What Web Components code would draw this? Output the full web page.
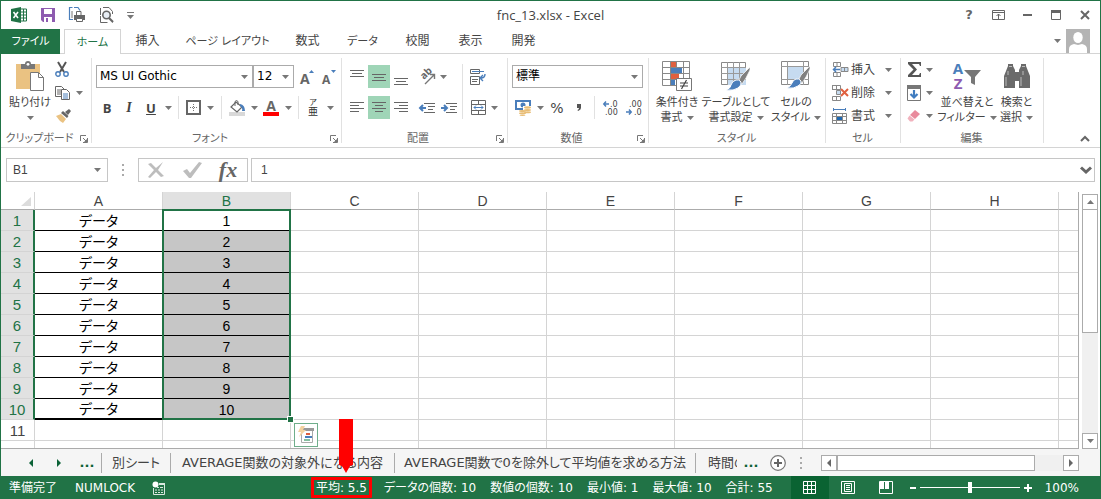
<!DOCTYPE html>
<html lang="ja">
<head>
<meta charset="utf-8">
<title>fnc_13.xlsx - Excel</title>
<style>
html,body{margin:0;height:100%}
body{font:12px/16px "DejaVu Sans","Noto Sans CJK JP",sans-serif;font-feature-settings:"palt";color:#444;background:#fff;overflow:hidden}
</style>
</head>
<body>
<excel-window></excel-window>
<script>
const ICONS = {
  arrow:[7,4,'<path d="M0 0h7L3.5 4z" fill="#777"/>'],
  caret:[10,6,'<path d="M1 5l4-4 4 4" fill="none" stroke="#666" stroke-width="2"/>'],
  launcher:[8,8,'<path d="M.5 6V.5H6" fill="none" stroke="#777"/><path d="M3 3l3 3M7.500 3v4.500H3" fill="none" stroke="#777"/><path d="M7 4v3H4z" fill="#777"/>'],
  excel:[16,16,'<path d="M9 2h6.500v12H9" fill="#fff" stroke="#217346"/><path d="M10 5h5M10 8h5M10 11h5M12.500 2v12" stroke="#217346"/><path d="M0 2l10-2v16L0 14z" fill="#217346"/><path d="M2.500 5l4.500 6M7 5l-4.500 6" stroke="#fff" stroke-width="1.600"/>'],
  save:[14,14,'<path d="M0 0h14v14H2l-2-2z" fill="#8e5bb0"/><path d="M3 1h8v5H3zM3 9h8v5H3z" fill="#fff"/><path d="M5 10h2v4H5z" fill="#8e5bb0"/>'],
  print:[17,16,'<path d="M3.500.5h-3v12H4M5 .5h4l2 3" fill="none" stroke="#4a7ebb" stroke-width="1.200"/><path d="M3 4v7" stroke="#777"/><path d="M7.500 8V4.500H12V8" fill="#fff" stroke="#666"/><path d="M5 8h11v5H5z" fill="#666"/><path d="M7.500 11.500h6v3h-6z" fill="#fff" stroke="#666"/>'],
  preview:[15,16,'<path d="M4 .5h6l3.500 4V7M1.500 8V1M1.500 9v6.500h7M13.500 14v1.500" fill="none" stroke="#666"/><circle cx="7.500" cy="8" r="3.700" fill="#e8eef5" stroke="#666" stroke-width="1.600"/><path d="M10 11l4 4" stroke="#666" stroke-width="2.200"/>'],
  qat:[7,7,'<path d="M0 0h7v1H0zM0 3h7L3.500 7z" fill="#777"/>'],
  ribbonopt:[13,10,'<path d="M.5.5h12v9H.5zM.5 2.500h12M6.500 9V4M4.500 6l2-2 2 2" fill="none" stroke="#666"/>'],
  min:[9,2,'<path d="M0 0h9v2H0z" fill="#666"/>'],
  max:[10,10,'<path d="M.5 1v8.500h9V1" fill="none" stroke="#666"/><path d="M0 0h10v3H0z" fill="#666"/>'],
  close:[10,10,'<path d="M1 1l8 8M9 1L1 9" stroke="#666" stroke-width="2"/>'],
  user:[24,24,'<path d="M0 0h24v24H0z" fill="#b4b4b4"/><ellipse cx="12" cy="8.500" rx="4.700" ry="5.500" fill="#fff"/><path d="M3 24v-4q0-4 5-5l4 1 4-1q5 1 5 5v4z" fill="#fff"/>'],
  paste:[28,30,'<path d="M0 3h24v25H0z" fill="#eac282"/><path d="M5 3h4a3 3 0 0 1 6 0h4v5H5z" fill="#777"/><circle cx="12" cy="3.300" r="1.400" fill="#fff"/><path d="M14.500 11.500h8l5 5v13h-13z" fill="#fff" stroke="#777"/><path d="M22.500 11.500v5h5" fill="none" stroke="#777"/>'],
  cut:[14,15,'<path d="M3 0l6 10M11 0L5 10" stroke="#555" stroke-width="2"/><circle cx="3" cy="12" r="2.200" fill="none" stroke="#4a7ebb" stroke-width="1.400"/><circle cx="11" cy="12" r="2.200" fill="none" stroke="#4a7ebb" stroke-width="1.400"/>'],
  copy:[15,14,'<path d="M.5.500h6l3 3v7h-9zM2 4h4M2 6h4M2 8h4" fill="#fff" stroke="#666"/><path d="M6.500 3.500h5l3 3v7h-8z" fill="#fff" stroke="#666"/><path d="M8 8h5M8 10h5M8 12h5" stroke="#4a7ebb"/>'],
  brush:[16,14,'<path d="M1 7l5-2 5 5-3 4-3-2z" fill="#eac282"/><path d="M6 4l6 5 1.500-2-5.500-5zM10 3l3 3 3-4-2-2z" fill="#666"/>'],
  borders:[15,15,'<path d="M1 1h13v13H1z" fill="none" stroke="#666" stroke-width="2"/><path d="M7.500 4v8M4 7.500h8" stroke="#777" stroke-dasharray="1 1"/>'],
  fill:[17,16,'<path d="M0 12h16v4H0z" fill="#d9d9d9"/><path d="M7 2l6 5-5 5-6-5z" fill="#fff" stroke="#666" stroke-width="1.200"/><path d="M6 6V1.500q1.500-2 3 0V5" fill="none" stroke="#666"/><path d="M11 4q5 1 5 7l-3 0q1-3-2-5z" fill="#4a7ebb"/>'],
  fontcolor:[16,17,'<path d="M0 13h16v4H0z" fill="#f00"/><text x="8" y="12" font-size="14" font-weight="bold" font-family="Open Sans" text-anchor="middle" fill="#666">A</text>'],
  grow:[14,16,'<text x="0" y="15" font-size="14" font-weight="bold" font-family="Open Sans" fill="#666">A</text><path d="M9 4h5l-2.500-3z" fill="#4a7ebb"/>'],
  shrink:[14,16,'<text x="0" y="15" font-size="12" font-weight="bold" font-family="Open Sans" fill="#666">A</text><path d="M9 1h5l-2.500 3z" fill="#4a7ebb"/>'],
  ruby:[10,17,'<text x="5" y="6" font-size="8" text-anchor="middle" fill="#333">ア</text><text x="5" y="16" font-size="10" text-anchor="middle" fill="#333">亜</text>'],
  atop:[14,16,'<path d="M0 1.500h14M2 4.500h10M0 7.500h14" stroke="#666"/>'],
  amid:[14,16,'<path d="M0 5.500h14M2 8.500h10M0 11.500h14" stroke="#666"/>'],
  abot:[14,16,'<path d="M0 9.500h14M2 12.500h10M0 15.500h14" stroke="#666"/>'],
  left:[14,13,'<path d="M0 1.500h14M0 4.500h9M0 7.500h14M0 10.500h9" stroke="#666"/>'],
  center:[14,13,'<path d="M0 1.500h14M3 4.500h8M0 7.500h14M3 10.500h8" stroke="#666"/>'],
  right:[14,13,'<path d="M0 1.500h14M5 4.500h9M0 7.500h14M5 10.500h9" stroke="#666"/>'],
  orient:[16,16,'<text x="0" y="0" transform="translate(5 11) rotate(-45)" font-size="10" font-weight="bold" font-family="Open Sans" fill="#666">ab</text><path d="M6 15l9-9M11 5.500h4.500V10" fill="none" stroke="#777" stroke-width="1.400"/>'],
  outdent:[16,12,'<path d="M5 1.500h11M9 4.500h7M9 7.500h5M5 10.500h11" stroke="#666"/><path d="M7 6H2M4 3L1 6l3 3" fill="none" stroke="#4a7ebb" stroke-width="2"/>'],
  indent:[16,12,'<path d="M5 1.500h11M9 4.500h7M9 7.500h5M5 10.500h11" stroke="#666"/><path d="M0 6h5M3 3l3 3-3 3" fill="none" stroke="#4a7ebb" stroke-width="2"/>'],
  wrap:[16,16,'<path d="M.5.500h9v4h-9zM.5 7.500h9v8h-9zM2 10.500h6M2 12.500h5" fill="none" stroke="#666"/><path d="M2 2.500h12" stroke="#4a7ebb"/><path d="M15 5q0 4-4 4M13 6l-3 3 3 3" fill="none" stroke="#4a7ebb" stroke-width="1.400"/>'],
  merge:[15,15,'<path d="M.5.500h14v14H.5zM0 4.500h15M0 10.500h15M7.500 0v4M7.500 11v4" fill="none" stroke="#666"/><path d="M3 7.500h9M5 5.500l-2 2 2 2M10 5.500l2 2-2 2" fill="none" stroke="#4a7ebb"/>'],
  currency:[17,16,'<path d="M1 1h14v8H1z" fill="#fff" stroke="#4a7ebb" stroke-width="2"/><circle cx="8" cy="5" r="2.500" fill="#4a7ebb"/><path d="M8 6h9v8h-4v2H4v-6h4z" fill="#fff"/><g fill="#e8bd76"><ellipse cx="12.500" cy="7.500" rx="3.500" ry="1.200"/><ellipse cx="12.500" cy="10" rx="3.500" ry="1"/><ellipse cx="12.500" cy="12.200" rx="3.500" ry="1"/><ellipse cx="7.500" cy="11" rx="3.500" ry="1"/><ellipse cx="7.500" cy="13.200" rx="3.500" ry="1"/><ellipse cx="7.500" cy="15.200" rx="3" ry=".8"/></g>'],
  comma:[6,12,'<path d="M1 2h4v4q0 2-3 3l-.5-1q1.500-.7 1.500-2H1z" fill="#555"/>'],
  incdec:[16,16,'<text x="7" y="7" font-size="8" fill="#444">.0</text><text x="2" y="15" font-size="8" fill="#444">.00</text><path d="M6 4H1M3 1.500L.8 4 3 6.500" fill="none" stroke="#4a7ebb" stroke-width="1.500"/>'],
  decdec:[16,16,'<text x="3" y="7" font-size="8" fill="#444">.00</text><text x="8" y="15" font-size="8" fill="#444">.0</text><path d="M0 12h5M3 9.500L5.200 12 3 14.500" fill="none" stroke="#4a7ebb" stroke-width="1.500"/>'],
  cond:[30,31,'<path d="M.5.500h27v24H.5zM0 6.500h28M0 12.500h28M0 18.500h28M8.500 0v25M14.500 0v25M21.500 0v25" fill="#fff" stroke="#888"/><path d="M9 1h5v5H9zM9 13h8v5H9z" fill="#e0603f"/><path d="M9 7h11v5H9zM9 19h4v5H9z" fill="#4a7ebb"/><path d="M14.500 17.500h15v12h-15z" fill="#fff" stroke="#777"/><path d="M18 22h8M18 25h8M24.500 19l-5 9" stroke="#444" stroke-width="1.200"/>'],
  tablefmt:[30,30,'<path d="M.5 1.500h24v22H.5z" fill="#fff" stroke="#888"/><path d="M7 7h18v17H7z" fill="#c6dbf0"/><path d="M0 6.500h25M0 12.500h25M0 18.500h25M6.500 1v23M12.500 1v23M18.500 1v23" stroke="#999"/><path d="M29 6l-9 9-3 6 4 2 4-6 4-8z" fill="#808080" stroke="#fff" stroke-width=".7"/><path d="M15 19q3-1 5 2 1 3-3 6-4 3-12 2 5-2 5-5 1-4 5-5z" fill="#4a7ebb" stroke="#fff"/>'],
  cellstyle:[30,30,'<path d="M.5.500h27v23H.5z" fill="#fff" stroke="#888"/><path d="M7 6h15v12H7z" fill="#c6dbf0"/><path d="M0 5.500h28M0 18.500h28M6.500 0v24M22.500 0v24" stroke="#999"/><path d="M29 5l-9 9-3 6 4 2 4-6 4-8z" fill="#808080" stroke="#fff" stroke-width=".7"/><path d="M15 18q3-1 5 2 1 3-3 5-4 3-11 2 4-2 5-5 1-3 4-4z" fill="#4a7ebb" stroke="#fff"/>'],
  insert:[17,16,'<path d="M1.500.500h7v4h-7zM5 0v5M1.500 10.500h7v4h-7zM5 10v5" fill="none" stroke="#888"/><path d="M9 5.500h7v4H9zM12.500 5v4" fill="#c6dbf0" stroke="#888"/><path d="M8 7.500H2M4 5L1.500 7.500 4 10" fill="none" stroke="#4a7ebb" stroke-width="1.500"/>'],
  del:[17,16,'<path d="M.5.500h8v4h-8zM4.500 0v5M.5 11.500h8v4h-8zM4.500 11v5M.5 0v5" fill="none" stroke="#888"/><path d="M4.500 5.500h4v4h-4z" fill="#c6dbf0" stroke="#888"/><path d="M9 4l7 7M16 4l-7 7" stroke="#e0603f" stroke-width="2"/>'],
  format:[17,16,'<path d="M.5 5.500h14v10H.5zM0 8.500h15M0 12.500h15M4.500 5v11M10.500 5v11" fill="none" stroke="#888"/><path d="M5 9h5v3H5z" fill="#1f68b0"/><path d="M1 1.500h13M1.500 0v3M13.500 0v3" stroke="#4a7ebb"/>'],
  sum:[15,15,'<path d="M1 0h13v4h-1l-1-2H5l5 5.500L5 13h7l1-2h1v4H1v-2l5.500-5.500L1 2z" fill="#555"/>'],
  filldown:[14,16,'<path d="M.5.500h13v15H.5z" fill="#fff" stroke="#777"/><path d="M0 0h14v4H0z" fill="#777"/><path d="M7 5v7M3.500 9L7 12.500 10.500 9" fill="none" stroke="#3f7cc0" stroke-width="2.200"/>'],
  erase:[14,13,'<path d="M8 1l5 4-5 5-5-4z" fill="#e98a9c"/><path d="M2.500 6.500l5 4-2 2H3L.5 9.500z" fill="#f1b2bd"/>'],
  sort:[30,29,'<text x="6" y="12" font-size="15" font-family="Open Sans" font-weight="bold" text-anchor="middle" fill="#4a7ebb">A</text><text x="6" y="27" font-size="15" font-family="Open Sans" font-weight="bold" text-anchor="middle" fill="#8e5bb0">Z</text><path d="M12 8h17l-6 7v8l-4-2v-6z" fill="#777"/>'],
  find:[28,26,'<path d="M5 3V1h5v2l2 4v18H1V13zM18 3V1h5v2l4 10v12H16V7z" fill="#6a6a6a"/><path d="M12 9h4v9h-4z" fill="#6a6a6a"/><path d="M3 14v9M6 3.500h3M19 3.500h3M18 14v9M5 8v4M20 8v4" stroke="#bbb"/>'],
  dots:[2,12,'<path d="M0 0h2v2H0zM0 5h2v2H0zM0 10h2v2H0z" fill="#aaa"/>'],
  cancel:[18,16,'<path d="M1 2l3-1 5 5 7-6-5 8 6 6-3 1-5-5-6 6-2-1 6-7z" fill="#bdbdbd"/>'],
  enter:[19,16,'<path d="M0 9l4-2 3 4L16 0l3 1L8 16H6z" fill="#bdbdbd"/>'],
  chevron:[12,8,'<path d="M1 1.500l5 4.500 5-4.500" fill="none" stroke="#666" stroke-width="3"/>'],
  corner:[10,9,'<path d="M10 0v9H0z" fill="#dcdcdc"/>'],
  pasteopt:[18,18,'<path d="M4.500 4v12.500h11V4z" fill="#fff" stroke="#aaa"/><path d="M6 2h11v3H6z" fill="#999"/><path d="M4 0h4L6 4h3L2 11l2-5H1z" fill="#f3d2a0"/><path d="M9 7h4v2H9z" fill="#e0603f"/><path d="M8 10h7v2H8z" fill="#4a7ebb"/><path d="M7 13h6v2H7z" fill="#86bfa0"/>'],
  prev:[4,8,'<path d="M4 0v8L0 4z" fill="#0b6237"/>'],
  next:[4,8,'<path d="M0 0v8l4-4z" fill="#0b6237"/>'],
  plus:[16,16,'<circle cx="8" cy="8" r="7.300" fill="#fff" stroke="#777" stroke-width="1.200"/><path d="M4 8h8M8 4v8" stroke="#666" stroke-width="2"/>'],
  sleft:[4,8,'<path d="M4 0v8L0 4z" fill="#666"/>'],
  sright:[4,8,'<path d="M0 0v8l4-4z" fill="#666"/>'],
  sup:[7,4,'<path d="M0 4h7L3.500 0z" fill="#777"/>'],
  macro:[13,14,'<path d="M12.500 3v10.500h-11V7M8 3h5M5 6.500h2M8 6.500h3M3 9h2M6 9h2M9 9h2M3 11.500h2M6 11.500h2M9 11.500h2" fill="none" stroke="#d9e8df"/><path d="M7 2h6v2H7z" fill="#d9e8df"/><circle cx="3.500" cy="3.500" r="3" fill="#fff"/>'],
  normal:[13,13,'<path d="M.5.500h12v12H.5zM0 4.500h13M0 8.500h13M4.500 0v13M8.500 0v13" fill="none" stroke="#fff"/>'],
  page:[14,13,'<path d="M.5.500h13v12H.5z" fill="none" stroke="#fff"/><path d="M3.500 2.500h7v8h-7zM5 4.500h4M5 6.500h4M5 8.500h4" fill="none" stroke="#fff"/>'],
  break:[14,13,'<path d="M.5.500h13v12H.5z" fill="none" stroke="#fff"/><path d="M1 0h4v8H1zM6 0h4v8H6z" fill="#fff"/>'],
  zminus:[6,2,'<path d="M0 0h6v2H0z" fill="#fff"/>'],
  zplus:[8,8,'<path d="M0 3h8v2H0zM3 0h2v8H3z" fill="#fff"/>']
};

function define(name, html, setup) {
  const template = document.createElement('template');
  template.innerHTML = html;
  customElements.define(name, class extends HTMLElement {
    connectedCallback() {
      if (this.shadowRoot) return;
      this.attachShadow({mode:'open'}).append(template.content.cloneNode(true));
      if (setup) setup(this, this.shadowRoot);
    }
  });
}

define('x-icon', '<style>:host{display:inline-flex;flex:none}svg{display:block;overflow:visible}</style>', (host, root) => {
  const [w, h, art] = ICONS[host.getAttribute('name')];
  root.innerHTML += `<svg width="${w}" height="${h}" viewBox="0 0 ${w} ${h}" aria-hidden="true">${art}</svg>`;
});

/* Small button: an icon, or slotted text, or both */
define('tool-button', `<style>
:host{display:flex;flex:none;width:var(--w,22px);height:var(--h,23px)}
:host([active]){background:#9fd5b7}
button{all:unset;display:flex;align-items:center;justify-content:var(--justify,center);gap:2px;width:100%;height:100%}
.end{margin-left:auto;margin-right:8px}
</style><button type="button"><slot></slot></button>`, (host, root) => {
  const button = root.querySelector('button');
  button.setAttribute('aria-label', host.getAttribute('label') || host.textContent);
  if (host.hasAttribute('icon')) button.insertAdjacentHTML('afterbegin', `<x-icon name="${host.getAttribute('icon')}"></x-icon>`);
  if (host.hasAttribute('menu')) button.insertAdjacentHTML('beforeend', '<x-icon class="end" name="arrow"></x-icon>');
});

/* Tall button: icon over two lines of caption */
define('big-button', `<style>
:host{display:flex;flex:none;width:var(--w,60px)}
button{all:unset;display:flex;flex-direction:column;align-items:center;width:100%;text-align:center;font-size:11px;line-height:15px;white-space:nowrap}
.art{display:flex;align-items:center;height:32px;padding:6px 0 3px}
.second{display:flex;align-items:center;justify-content:center;gap:4px;height:15px}
</style><button type="button"><span class="art"></span><slot></slot><span class="second"><slot name="second"></slot><x-icon name="arrow"></x-icon></span></button>`, (host, root) => {
  root.querySelector('.art').innerHTML = `<x-icon name="${host.getAttribute('icon')}"></x-icon>`;
});

define('ribbon-group', `<style>
:host{display:flex;flex-direction:column;flex:none;box-sizing:border-box;width:var(--group);background:linear-gradient(#e1e1e1,#e1e1e1) right top 4px/1px 85px no-repeat}
.body{flex:1;display:flex;padding:0 4px}
footer{display:flex;align-items:center;height:16px;padding-right:2px;color:#666;font-size:11px;text-align:center;white-space:nowrap}
footer span{flex:1}
</style><div class="body"><slot></slot></div><footer><span></span></footer>`, (host, root) => {
  root.querySelector('span').textContent = host.getAttribute('label');
  if (host.hasAttribute('launcher')) root.querySelector('footer').insertAdjacentHTML('beforeend', '<tool-button style="--w:12px;--h:12px" label="詳細設定" icon="launcher"></tool-button>');
});

define('combo-box', `<style>
:host{display:grid;box-sizing:border-box;height:23px;width:var(--w);border:1px solid #ababab;align-items:center;background:#fff}
select{all:unset;grid-area:1/1;color:#000;padding-left:3px;line-height:21px;white-space:nowrap}
x-icon{grid-area:1/1;justify-self:end;margin-right:4px;pointer-events:none}
</style><select></select><x-icon name="arrow"></x-icon>`, (host, root) => {
  const select = root.querySelector('select');
  select.setAttribute('aria-label', host.getAttribute('label'));
  select.add(new Option(host.getAttribute('value')));
});

define('title-bar', `<style>
:host{display:grid;grid-template-columns:1fr auto 1fr;align-items:center;height:28px}
.quick{display:flex;align-items:center;gap:6px;padding-left:6px}
.window{display:flex;justify-content:flex-end;align-items:center;gap:7px;padding-right:4px}
h1{margin:0;font:13px/16px "Open Sans",sans-serif;color:#444}
.window b{font-size:13px;color:#666}
</style>
<div class="quick"><tool-button icon="excel" label="Excel" style="--w:24px"></tool-button><tool-button icon="save" label="上書き保存"></tool-button><tool-button icon="print" label="印刷" style="--w:24px"></tool-button><tool-button icon="preview" label="印刷プレビュー"></tool-button><tool-button icon="qat" label="カスタマイズ" style="--w:14px"></tool-button></div>
<h1>fnc_13.xlsx - Excel</h1>
<div class="window"><tool-button label="ヘルプ"><b>?</b></tool-button><tool-button icon="ribbonopt" label="リボンの表示"></tool-button><tool-button icon="min" label="最小化"></tool-button><tool-button icon="max" label="最大化"></tool-button><tool-button icon="close" label="閉じる"></tool-button></div>`);

define('ribbon-tabs', `<style>
:host{display:flex;height:25px;border-bottom:1px solid #d4d4d4;box-sizing:border-box}
nav{display:flex;flex:1}
button{all:unset;box-sizing:border-box;height:25px;line-height:25px;width:var(--w,53px);text-align:center;white-space:nowrap}
.kana{font-size:11px}
.file{background:#217346;color:#fff;--w:59px;margin-right:4px}
.on{border:1px solid #d4d4d4;border-bottom:0;background:#fff;color:#217346;--w:57px}
.account{display:flex;align-items:center;padding-right:10px;gap:2px}
</style>
<nav><button class="file kana">ファイル</button><button class="on kana">ホーム</button><button>挿入</button><button class="kana" style="--w:107px">ページ レイアウト</button><button>数式</button><button class="kana" style="--w:57px">データ</button><button>校閲</button><button>表示</button><button>開発</button></nav>
<div class="account"><tool-button icon="arrow" label="アカウント" style="--w:14px"></tool-button><x-icon name="user"></x-icon></div>`);

define('excel-ribbon', `<style>
:host{display:flex;height:93px;border-bottom:1px solid #d4d4d4}
.rows{display:grid;grid-template-rows:23px 23px;gap:8px;padding-top:11px;align-content:start}
.row{display:flex}
.stack{display:grid;grid-template-rows:repeat(3,23px);padding-top:4px;align-content:start}
.sep{width:1px;height:23px;background:#e1e1e1;margin:0 4px;flex:none}
.sep.tall{height:55px;margin:10px 4px 0 2px}
.gap{width:4px}
.gap.small{width:2px}
.cells{padding-left:2px;--w:68px}
.edit{padding-left:2px;--w:34px}
.tight{--justify:flex-start}
.collapse{margin:auto 4px 0 auto}
b,i,u{font:bold 13px/16px "Open Sans",sans-serif;color:#444}
i{font:italic bold 14px/16px "Liberation Serif",serif}
.percent{font-size:14px}
</style>
<ribbon-group label="クリップボード" launcher style="--group:91px">
<big-button icon="paste" style="--w:50px">貼り付け</big-button>
<div class="stack tight"><tool-button icon="cut" label="切り取り"></tool-button><tool-button icon="copy" label="コピー" menu style="--w:36px"></tool-button><tool-button icon="brush" label="書式のコピー"></tool-button></div>
</ribbon-group>
<ribbon-group label="フォント" launcher style="--group:250px">
<div class="rows"><div class="row"><combo-box label="フォント" value="MS UI Gothic" style="--w:157px"></combo-box><combo-box label="サイズ" value="12" style="--w:41px"></combo-box><div class="gap small"></div><tool-button icon="grow" label="拡大"></tool-button><tool-button icon="shrink" label="縮小"></tool-button></div>
<div class="row"><tool-button><b>B</b></tool-button><tool-button><i>I</i></tool-button><tool-button><u>U</u></tool-button><tool-button icon="arrow" label="下線" style="--w:12px"></tool-button><span class="sep"></span><tool-button icon="borders" label="罫線" style="--w:20px"></tool-button><tool-button icon="arrow" label="罫線の種類" style="--w:14px"></tool-button><span class="sep"></span><tool-button icon="fill" label="塗りつぶし"></tool-button><tool-button icon="arrow" label="塗りつぶしの色" style="--w:12px"></tool-button><tool-button icon="fontcolor" label="フォントの色"></tool-button><tool-button icon="arrow" label="色の選択" style="--w:12px"></tool-button><span class="sep"></span><tool-button icon="ruby" label="ふりがな" style="--w:20px"></tool-button><tool-button icon="arrow" label="ふりがなの設定" style="--w:14px"></tool-button></div></div>
</ribbon-group>
<ribbon-group label="配置" launcher style="--group:166px">
<div class="rows"><div class="row"><tool-button icon="atop" label="上揃え"></tool-button><tool-button icon="amid" label="上下中央揃え" active></tool-button><tool-button icon="abot" label="下揃え"></tool-button><div class="gap"></div><tool-button icon="orient" label="方向"></tool-button><tool-button icon="arrow" label="方向の種類" style="--w:10px"></tool-button></div>
<div class="row"><tool-button icon="left" label="左揃え"></tool-button><tool-button icon="center" label="中央揃え" active></tool-button><tool-button icon="right" label="右揃え"></tool-button><div class="gap"></div><tool-button icon="outdent" label="インデントを減らす"></tool-button><tool-button icon="indent" label="インデントを増やす"></tool-button></div></div>
<span class="sep tall"></span>
<div class="rows"><div class="row"><tool-button icon="wrap" label="折り返し"></tool-button></div><div class="row"><tool-button icon="merge" label="セルを結合"></tool-button><tool-button icon="arrow" label="結合の種類" style="--w:10px"></tool-button></div></div>
</ribbon-group>
<ribbon-group label="数値" launcher style="--group:141px">
<div class="rows"><combo-box label="表示形式" value="標準" style="--w:131px"></combo-box>
<div class="row"><tool-button icon="currency" label="通貨"></tool-button><tool-button icon="arrow" label="通貨の種類" style="--w:12px"></tool-button><tool-button><span class="percent">%</span></tool-button><tool-button icon="comma" label="桁区切り"></tool-button><span class="sep"></span><tool-button icon="incdec" label="小数点以下を増やす" style="--w:24px"></tool-button><tool-button icon="decdec" label="小数点以下を減らす"></tool-button></div></div>
</ribbon-group>
<ribbon-group label="スタイル" style="--group:177px">
<big-button icon="cond" style="--w:48px">条件付き<span slot="second">書式</span></big-button><big-button icon="tablefmt" style="--w:70px">テーブルとして<span slot="second">書式設定</span></big-button><big-button icon="cellstyle" style="--w:50px">セルの<span slot="second">スタイル</span></big-button>
</ribbon-group>
<ribbon-group label="セル" style="--group:75px">
<div class="stack tight cells"><tool-button icon="insert" menu>挿入</tool-button><tool-button icon="del" menu>削除</tool-button><tool-button icon="format" menu>書式</tool-button></div>
</ribbon-group>
<ribbon-group label="編集" style="--group:143px">
<div class="stack tight edit"><tool-button icon="sum" label="合計" menu></tool-button><tool-button icon="filldown" label="フィル" menu></tool-button><tool-button icon="erase" label="クリア" menu></tool-button></div>
<big-button icon="sort" style="--w:52px">並べ替えと<span slot="second">フィルター</span></big-button><big-button icon="find" style="--w:47px">検索と<span slot="second">選択</span></big-button>
</ribbon-group>
<tool-button class="collapse" icon="caret" label="リボンを折りたたむ" style="--h:16px"></tool-button>`);

define('formula-bar', `<style>
:host{display:flex;padding:10px 5px;height:24px;align-items:center}
.box{box-sizing:border-box;height:24px;border:1px solid #c6c6c6;display:flex;align-items:center;background:#fff}
input{all:unset;flex:1;min-width:0;font:12px/16px "Liberation Sans",sans-serif;padding-left:6px;color:#444}
.name{width:102px;padding-right:6px}
.dots{margin:0 14px}
.keys{width:110px;padding-left:6px;gap:14px;margin-right:3px}
.formula{flex:1;padding-left:3px;padding-right:2px}
.fx{font:italic bold 22px/22px "Liberation Serif",serif;color:#666}
</style>
<div class="box name"><input aria-label="名前ボックス" value="B1"><x-icon name="arrow"></x-icon></div>
<x-icon class="dots" name="dots"></x-icon>
<div class="box keys"><tool-button icon="cancel" label="キャンセル"></tool-button><tool-button icon="enter" label="入力"></tool-button><tool-button label="関数の挿入"><span class="fx">fx</span></tool-button></div>
<div class="box formula"><input aria-label="数式バー" value="1"><x-icon name="chevron"></x-icon></div>`);

define('scroll-bar', `<style>
:host{display:flex;box-sizing:border-box;flex:none;background:#f0f0f0}
:host([vertical]){flex-direction:column;width:16px}
:host(:not([vertical])){height:16px}
tool-button,.thumb{box-sizing:border-box;border:1px solid #ababab;background:#fff;--w:16px;--h:16px}
.thumb{flex:0 0 var(--thumb)}
.end{margin-left:auto}
:host([vertical]) .thumb{margin-top:-1px}
:host([vertical]) .end{margin:auto 0 0}
</style><tool-button class="start" label="戻る"></tool-button><div class="thumb"></div><tool-button class="end" label="進む"></tool-button>`, (host, root) => {
  const vertical = host.hasAttribute('vertical');
  root.querySelector('.start').setAttribute('icon', vertical ? 'sup' : 'sleft');
  root.querySelector('.end').setAttribute('icon', vertical ? 'arrow' : 'sright');
  root.querySelectorAll('tool-button').forEach(b => b.replaceWith(b.cloneNode(true)));
});

define('sheet-grid', `<style>
:host{display:flex;flex:1;min-height:0}
.view{flex:1;min-width:0;overflow:hidden;border:solid #ababab;border-width:0 1px 1px 0;box-sizing:border-box}
table{table-layout:fixed;width:100%;border-spacing:0;font-family:"Liberation Sans","Noto Sans CJK JP",sans-serif;font-size:14px;line-height:18px;color:#000}
th,td{box-sizing:border-box;height:21px;padding:2px 0 0;border:solid #d4d4d4;border-width:0 1px 1px 0;font-weight:normal;text-align:center;white-space:nowrap}
th:last-child,td:last-child{border-right:0}
th{color:#444}
thead th{height:18px;line-height:16px;padding:1px 0 0;border-bottom-color:#ababab}
th.on{background:#e1e1e1;color:#217346}
tbody th.on{border-right:2px solid #217346}
tbody th{font-size:15px}
.corner{text-align:right}
.corner x-icon{padding-right:3px}
.data{border-bottom-color:#000}
.last{border-bottom-width:2px;padding:1px 0 0}
.sel{background:#c6c6c6;border-bottom-color:#000}
.first{position:relative;background:#fff}
.range{position:absolute;z-index:1;left:-1px;top:-1px;width:129px;height:211px;box-sizing:border-box;border:2px solid #217346}
.handle{position:absolute;right:-5px;bottom:-5px;width:5px;height:5px;background:#217346;border:1px solid #fff}
.options{position:absolute;right:-29px;bottom:-29px;box-sizing:border-box;border:1px solid #6fae8b;background:#fff;--w:24px;--h:24px}
scroll-bar{margin:2px 2px 0 3px;--thumb:124px}
</style>
<div class="view"><table><colgroup><col style="width:34px"></colgroup><thead><tr></tr></thead><tbody></tbody></table></div>
<scroll-bar vertical></scroll-bar>`, (host, root) => {
  const letters = [...'ABCDEFGH'];
  root.querySelector('colgroup').insertAdjacentHTML('beforeend', letters.map(() => '<col style="width:128px">').join('') + '<col>');
  root.querySelector('thead tr').innerHTML = '<th class="corner"><x-icon name="corner"></x-icon></th>' +
    letters.map(c => `<th scope="col"${c === 'B' ? ' class="on"' : ''}>${c}</th>`).join('') + '<th></th>';
  const marker = '<div class="range"><div class="handle"></div><tool-button class="options" icon="pasteopt" label="クイック分析"></tool-button></div>';
  let rows = '';
  for (let r = 1; r <= 12; r++) {
    const used = r <= 10;
    rows += `<tr><th scope="row"${used ? ' class="on"' : ''}>${r <= 11 ? r : ''}</th>` +
      (used ? `<td class="data${r === 10 ? ' last' : ''}">データ</td><td class="sel${r === 1 ? ' first' : ''}">${r}${r === 1 ? marker : ''}</td>` : '<td></td><td></td>') +
      '<td></td>'.repeat(7) + '</tr>';
  }
  root.querySelector('tbody').innerHTML = rows;
});

define('sheet-tabs', `<style>
:host{display:flex;align-items:center;height:27px;background:#f5f5f5;padding-right:21px;font-size:13px;--h:20px}
.nav{display:flex;width:100px;flex:none;padding-left:16px;box-sizing:border-box;--w:28px}
.tabs{display:flex;flex:0 1 auto;min-width:0;overflow:hidden}
.tabs button{all:unset;flex:none;box-sizing:border-box;width:var(--w);height:20px;line-height:20px;border-left:1px solid #ababab;text-align:center;white-space:nowrap}
.tabs .cut{overflow:hidden;text-align:left;padding-left:12px}
b{color:#0b6237}
.dots{margin:0 15px 0 9px}
scroll-bar{flex:1;--thumb:198px;max-width:258px;margin-left:auto}
</style>
<div class="nav"><tool-button icon="prev" label="前のシート"></tool-button><tool-button icon="next" label="次のシート"></tool-button><tool-button><b>...</b></tool-button></div>
<div class="tabs"><button style="--w:69px">別シート</button><button style="--w:224px">AVERAGE関数の対象外になる内容</button><button style="--w:301px">AVERAGE関数で0を除外して平均値を求める方法</button><button class="cut" style="--w:42px">時間の</button></div>
<tool-button style="--w:28px"><b>...</b></tool-button><tool-button icon="plus" label="新しいシート" style="--w:26px"></tool-button><x-icon class="dots" name="dots"></x-icon>
<scroll-bar></scroll-bar>`);

define('status-bar', `<style>
:host{display:flex;align-items:center;height:23px;background:#217346;color:#fff;padding:0 21px 0 8px;white-space:nowrap;--h:23px}
.mode{margin-right:18px}
.rec{margin-left:12px}
.stats{display:flex;align-items:center;margin-left:auto;gap:14px}
.callout{position:relative;box-sizing:border-box;border:3px solid #f00;height:21px;line-height:16px;padding:0 2px;border-radius:1px;margin-right:-2px}
.pointer{position:absolute;left:25px;bottom:20px;width:14px;height:57px}
.views{display:flex;margin-left:18px;--w:38px}
.on{background:#0a6332}
.zoom{display:flex;align-items:center;margin-left:5px}
input{appearance:none;width:100px;height:12px;margin:0 4px;background:linear-gradient(#fff,#fff) center/100% 1px no-repeat}
input::-webkit-slider-thumb{appearance:none;width:4px;height:11px;background:#fff}
.pct{margin-left:13px}
</style>
<span class="mode">準備完了</span><span>NUMLOCK</span><tool-button class="rec" icon="macro" label="マクロの記録"></tool-button>
<div class="stats"><span class="callout">平均: 5.5<svg class="pointer" viewBox="0 0 14 57" aria-hidden="true"><path d="M0 1h14v46l-3 1-4 7-4-7-3-1z" fill="#f00"/></svg></span><span>データの個数: 10</span><span>数値の個数: 10</span><span>最小値: 1</span><span>最大値: 10</span><span>合計: 55</span></div>
<div class="views"><tool-button class="on" icon="normal" label="標準"></tool-button><tool-button icon="page" label="ページ レイアウト"></tool-button><tool-button icon="break" label="改ページ プレビュー"></tool-button></div>
<div class="zoom"><x-icon name="zminus"></x-icon><input type="range" aria-label="ズーム" min="0" max="100" value="50"><x-icon name="zplus"></x-icon><span class="pct">100%</span></div>`);

define('excel-window', `<style>
:host{display:flex;flex-direction:column;height:100vh;box-sizing:border-box;border:1px solid #217346;border-bottom:0}
title-bar,ribbon-tabs,excel-ribbon,formula-bar,sheet-tabs,status-bar{flex:none}
status-bar{position:relative;z-index:2}
</style><title-bar></title-bar><ribbon-tabs></ribbon-tabs><excel-ribbon></excel-ribbon><formula-bar></formula-bar><sheet-grid></sheet-grid><sheet-tabs></sheet-tabs><status-bar></status-bar>`);
</script>
</body>
</html>
